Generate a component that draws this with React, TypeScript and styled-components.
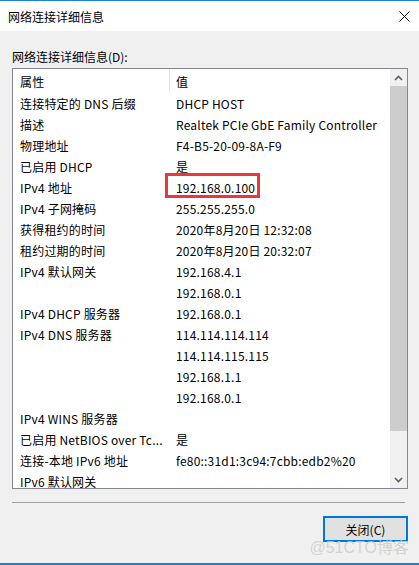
import React from 'react';
import styled, { createGlobalStyle } from 'styled-components';

const GlobalStyle = createGlobalStyle`
  html, body {
    margin: 0;
    padding: 0;
    background: #f0f0f0;
  }
  body {
    font-family: "Noto Sans CJK SC", "Noto Sans", sans-serif;
    font-size: 12px;
    color: #000;
  }
`;

const Window = styled.div`
  position: relative;
  width: 419px;
  height: 565px;
  box-sizing: border-box;
  background: #f0f0f0;
  border-top: 1px solid #1883d7;
  border-bottom: 2px solid #1883d7;
  display: flex;
  flex-direction: column;
  overflow: hidden;
`;

const TitleBar = styled.div`
  height: 30px;
  background: #fff;
  display: flex;
  align-items: center;
  justify-content: space-between;
  padding: 0 9px 0 8px;
  flex-shrink: 0;
`;

const Title = styled.span`
  font-size: 12px;
  line-height: 16px;
  margin-top: 1px;
`;

const Body = styled.div`
  padding: 0 12px;
  display: flex;
  flex-direction: column;
`;

const Label = styled.div`
  margin-top: 18px;
  line-height: 16px;
  height: 16px;
`;

const ListBox = styled.div`
  margin-top: 3px;
  width: 396px;
  height: 421px;
  box-sizing: border-box;
  border: 1px solid #828790;
  background: #fff;
  display: flex;
`;

const Table = styled.div`
  flex: 1;
  overflow: hidden;
  letter-spacing: 0.2px;
`;

const Row = styled.div<{ $header?: boolean }>`
  display: grid;
  grid-template-columns: 156px 1fr;
  height: ${p => (p.$header ? 24 : 21)}px;
  align-items: center;
  white-space: nowrap;
`;

const Cell = styled.div<{ $header?: boolean; $divider?: boolean }>`
  position: relative;
  height: 100%;
  display: flex;
  align-items: center;
  box-sizing: border-box;
  border-left: ${p => (p.$divider ? '1px solid #e5e5e5' : 'none')};
  padding-left: ${p => (p.$divider ? 6 : 7)}px;
  padding-top: ${p => (p.$header ? 1 : 0)}px;
`;

const Highlight = styled.span`
  position: relative;
  &::after {
    content: '';
    position: absolute;
    left: -11px;
    top: -6px;
    width: 89px;
    height: 19px;
    border: 3px solid #e8383d;
  }
`;

const Scrollbar = styled.div`
  width: 17px;
  background: #f0f0f0;
  display: flex;
  flex-direction: column;
  flex-shrink: 0;
`;

const ScrollArrow = styled.div`
  height: 17px;
  display: flex;
  align-items: center;
  justify-content: center;
`;

const ScrollTrack = styled.div`
  flex: 1;
  display: flex;
  flex-direction: column;
`;

const Thumb = styled.div`
  height: 345px;
  background: #cdcdcd;
`;

const Separator = styled.div`
  margin-top: 13px;
  width: 393px;
  height: 1px;
  background: #a0a0a0;
`;

const Footer = styled.div`
  display: flex;
  justify-content: flex-end;
  padding-right: 11px;
  margin-top: 13px;
`;

const Button = styled.button`
  width: 85px;
  height: 26px;
  box-sizing: border-box;
  border: 2px solid #0078d7;
  background: #e1e1e1;
  font-family: inherit;
  font-size: 12px;
  color: #000;
  padding: 0;
`;

const Watermark = styled.div`
  position: absolute;
  right: 10px;
  bottom: 5px;
  font-size: 16px;
  color: rgba(205, 205, 205, 0.85);
  font-family: "Liberation Sans", "Noto Sans CJK SC", sans-serif;
`;

const rows: [string, string][] = [
  ['连接特定的 DNS 后缀', 'DHCP HOST'],
  ['描述', 'Realtek PCIe GbE Family Controller'],
  ['物理地址', 'F4-B5-20-09-8A-F9'],
  ['已启用 DHCP', '是'],
  ['IPv4 地址', '192.168.0.100'],
  ['IPv4 子网掩码', '255.255.255.0'],
  ['获得租约的时间', '2020年8月20日 12:32:08'],
  ['租约过期的时间', '2020年8月20日 20:32:07'],
  ['IPv4 默认网关', '192.168.4.1'],
  ['', '192.168.0.1'],
  ['IPv4 DHCP 服务器', '192.168.0.1'],
  ['IPv4 DNS 服务器', '114.114.114.114'],
  ['', '114.114.115.115'],
  ['', '192.168.1.1'],
  ['', '192.168.0.1'],
  ['IPv4 WINS 服务器', ''],
  ['已启用 NetBIOS over Tc...', '是'],
  ['连接-本地 IPv6 地址', 'fe80::31d1:3c94:7cbb:edb2%20'],
  ['IPv6 默认网关', ''],
];

const Chevron = ({ down }: { down?: boolean }) => (
  <svg width="9" height="6" viewBox="0 0 9 6">
    <path
      d={down ? 'M1 1 L4.5 4.5 L8 1' : 'M1 5 L4.5 1.5 L8 5'}
      stroke="#606060"
      strokeWidth="1.6"
      fill="none"
    />
  </svg>
);

const App: React.FC = () => (
  <>
    <GlobalStyle />
    <Window>
      <TitleBar>
        <Title>网络连接详细信息</Title>
        <svg width="11" height="11" viewBox="0 0 11 11">
          <path d="M0.5 0.5 L10.5 10.5 M10.5 0.5 L0.5 10.5" stroke="#000" strokeWidth="1" />
        </svg>
      </TitleBar>
      <Body>
        <Label>网络连接详细信息(D):</Label>
        <ListBox>
          <Table>
            <Row $header>
              <Cell $header>属性</Cell>
              <Cell $header $divider>值</Cell>
            </Row>
            {rows.map(([k, v], i) => (
              <Row key={i}>
                <Cell>{k}</Cell>
                <Cell>{v === '192.168.0.100' ? <Highlight>{v}</Highlight> : v}</Cell>
              </Row>
            ))}
          </Table>
          <Scrollbar>
            <ScrollArrow><Chevron /></ScrollArrow>
            <ScrollTrack><Thumb /></ScrollTrack>
            <ScrollArrow><Chevron down /></ScrollArrow>
          </Scrollbar>
        </ListBox>
        <Separator />
      </Body>
      <Footer>
        <Button>关闭(C)</Button>
      </Footer>
      <Watermark>@51CTO博客</Watermark>
    </Window>
  </>
);

export default App;
